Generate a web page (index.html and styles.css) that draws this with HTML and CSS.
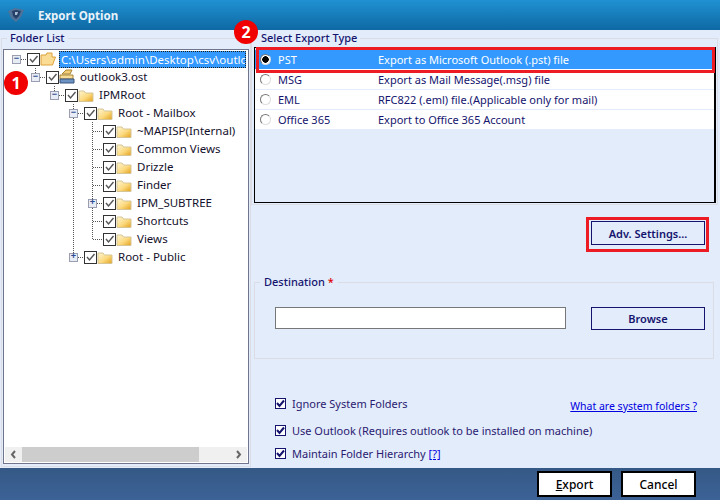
FILE: index.html
```html
<!DOCTYPE html>
<html lang="en">
<head>
    <meta charset="UTF-8">
    <meta name="viewport" content="width=device-width, initial-scale=1.0">
    <title>Export Option</title>
    <link rel="stylesheet" href="styles.css">
</head>
<body>
    <svg width="0" height="0" class="defs">
        <defs>
            <linearGradient id="fold" x1="0" y1="0" x2="1" y2="1">
                <stop offset="0" stop-color="#fff6d2"/>
                <stop offset="0.55" stop-color="#fbd97e"/>
                <stop offset="1" stop-color="#e3a11c"/>
            </linearGradient>
            <g id="closed">
                <path d="M1 2H6L7.5 4H15V12.5H1Z" fill="url(#fold)" stroke="#d6c596"/>
            </g>
            <g id="tick">
                <path d="M2 5 L4.5 8 L9.5 2" class="tick"/>
            </g>
        </defs>
    </svg>

    <div class="window">
        <div class="titlebar">
            <svg class="app-icon" width="18" height="16" viewBox="0 0 18 16">
                <path d="M1 4 L8 1 L17 3 L14 10 L9 15 L4 11 Z" fill="#4f7298"/>
                <path d="M5 4 L9 3 L14 4 L12 9 L9 12 L6 9 Z" fill="#27406a"/>
                <path d="M8 5 L11 5 L10 8 L8 8 Z" fill="#a9bdd2"/>
            </svg>
            <span>Export Option</span>
        </div>

        <div class="content">
            <div class="left-panel">
                <div class="group-title folder-title">Folder List</div>
                <div class="tree-box">
                    <!-- connector lines sit over the rows -->
                    <svg class="tree-lines" width="120" height="220">
                        <g stroke="#555" stroke-dasharray="1 1" fill="none">
                            <path d="M21 11.5H27"/>
                            <path d="M35.5 20V25M40 29.5H46"/>
                            <path d="M54.5 38V43M59 47.5H65"/>
                            <path d="M73.5 56V61M73.5 70V205M78 65.5H84M78 209.5H84"/>
                            <path d="M92.5 74V151M92.5 160V191M93 83.5H103M93 101.5H103M93 119.5H103M93 137.5H103M93 173.5H103M93 191.5H103M97 155.5H103"/>
                        </g>
                    </svg>
                    <div class="tree-row depth-0">
                        <span class="exp">&minus;</span><span class="chk"><svg width="11" height="11" viewBox="0 0 11 11"><use href="#tick"/></svg></span>
                        <svg class="folder" width="16" height="14" viewBox="0 0 16 14"><path d="M1 3H6L7 1H12V5H15.5L12.5 13H1Z" fill="#fbdc95" stroke="#dca23a"/></svg>
                        <span class="tree-label selected">C:\Users\admin\Desktop\csv\outlo</span>
                    </div>
                    <div class="tree-row depth-1">
                        <span class="exp">&minus;</span><span class="chk"><svg width="11" height="11" viewBox="0 0 11 11"><use href="#tick"/></svg></span>
                        <svg class="folder" width="16" height="16" viewBox="0 0 16 16"><path d="M3 5 L7 1 H13 L11 5Z" fill="#f3cd77" stroke="#a88435"/><path d="M1 6H14V10H1Z" fill="#f7dc98" stroke="#a88435"/><path d="M1 10H15V14H1Z" fill="#6d93c4" stroke="#39557f"/></svg>
                        <span class="tree-label">outlook3.ost</span>
                    </div>
                    <div class="tree-row depth-2">
                        <span class="exp">&minus;</span><span class="chk"><svg width="11" height="11" viewBox="0 0 11 11"><use href="#tick"/></svg></span>
                        <svg class="folder" width="16" height="13" viewBox="0 0 16 13"><use href="#closed"/></svg>
                        <span class="tree-label">IPMRoot</span>
                    </div>
                    <div class="tree-row depth-3">
                        <span class="exp">&minus;</span><span class="chk"><svg width="11" height="11" viewBox="0 0 11 11"><use href="#tick"/></svg></span>
                        <svg class="folder" width="16" height="13" viewBox="0 0 16 13"><use href="#closed"/></svg>
                        <span class="tree-label">Root - Mailbox</span>
                    </div>
                    <div class="tree-row depth-4">
                        <span class="exp none"></span><span class="chk"><svg width="11" height="11" viewBox="0 0 11 11"><use href="#tick"/></svg></span>
                        <svg class="folder" width="16" height="13" viewBox="0 0 16 13"><use href="#closed"/></svg>
                        <span class="tree-label">~MAPISP(Internal)</span>
                    </div>
                    <div class="tree-row depth-4">
                        <span class="exp none"></span><span class="chk"><svg width="11" height="11" viewBox="0 0 11 11"><use href="#tick"/></svg></span>
                        <svg class="folder" width="16" height="13" viewBox="0 0 16 13"><use href="#closed"/></svg>
                        <span class="tree-label">Common Views</span>
                    </div>
                    <div class="tree-row depth-4">
                        <span class="exp none"></span><span class="chk"><svg width="11" height="11" viewBox="0 0 11 11"><use href="#tick"/></svg></span>
                        <svg class="folder" width="16" height="13" viewBox="0 0 16 13"><use href="#closed"/></svg>
                        <span class="tree-label">Drizzle</span>
                    </div>
                    <div class="tree-row depth-4">
                        <span class="exp none"></span><span class="chk"><svg width="11" height="11" viewBox="0 0 11 11"><use href="#tick"/></svg></span>
                        <svg class="folder" width="16" height="13" viewBox="0 0 16 13"><use href="#closed"/></svg>
                        <span class="tree-label">Finder</span>
                    </div>
                    <div class="tree-row depth-4">
                        <span class="exp">+</span><span class="chk"><svg width="11" height="11" viewBox="0 0 11 11"><use href="#tick"/></svg></span>
                        <svg class="folder" width="16" height="13" viewBox="0 0 16 13"><use href="#closed"/></svg>
                        <span class="tree-label">IPM_SUBTREE</span>
                    </div>
                    <div class="tree-row depth-4">
                        <span class="exp none"></span><span class="chk"><svg width="11" height="11" viewBox="0 0 11 11"><use href="#tick"/></svg></span>
                        <svg class="folder" width="16" height="13" viewBox="0 0 16 13"><use href="#closed"/></svg>
                        <span class="tree-label">Shortcuts</span>
                    </div>
                    <div class="tree-row depth-4">
                        <span class="exp none"></span><span class="chk"><svg width="11" height="11" viewBox="0 0 11 11"><use href="#tick"/></svg></span>
                        <svg class="folder" width="16" height="13" viewBox="0 0 16 13"><use href="#closed"/></svg>
                        <span class="tree-label">Views</span>
                    </div>
                    <div class="tree-row depth-3">
                        <span class="exp">+</span><span class="chk"><svg width="11" height="11" viewBox="0 0 11 11"><use href="#tick"/></svg></span>
                        <svg class="folder" width="16" height="13" viewBox="0 0 16 13"><use href="#closed"/></svg>
                        <span class="tree-label">Root - Public</span>
                    </div>
                    <div class="scrollbar">
                        <svg class="arrow" width="17" height="15" viewBox="0 0 17 15"><path d="M10 4 L7 7.5 L10 11" /></svg>
                        <div class="thumb"></div>
                        <svg class="arrow" width="17" height="15" viewBox="0 0 17 15"><path d="M7 4 L10 7.5 L7 11" /></svg>
                    </div>
                </div>
            </div>

            <div class="right-panel">
                <div class="type-group">
                    <div class="group-title type-title">Select Export Type</div>
                    <div class="type-list">
                        <div class="type-row active"><span class="radio on"></span><span class="type-name">PST</span><span>Export as Microsoft Outlook (.pst) file</span></div>
                        <div class="type-row"><span class="radio"></span><span class="type-name">MSG</span><span>Export as Mail Message(.msg) file</span></div>
                        <div class="type-row"><span class="radio"></span><span class="type-name">EML</span><span>RFC822 (.eml) file.(Applicable only for mail)</span></div>
                        <div class="type-row"><span class="radio"></span><span class="type-name">Office 365</span><span>Export to Office 365 Account</span></div>
                    </div>
                </div>

                <div class="adv-row">
                    <button class="button adv-btn">Adv. Settings...</button>
                </div>

                <div class="destination">
                    <div class="group-title dest-title">Destination <span class="req">*</span></div>
                    <input class="dest-input" type="text">
                    <button class="button browse-btn">Browse</button>
                </div>

                <div class="options">
                    <div class="option first">
                        <span class="opt-check"><svg width="9" height="9" viewBox="0 0 9 9"><path d="M1 4 L3.5 7 L8 1.5" /></svg></span>
                        <span>Ignore System Folders</span>
                        <a class="link what-link" href="#">What are system folders ?</a>
                    </div>
                    <div class="option">
                        <span class="opt-check"><svg width="9" height="9" viewBox="0 0 9 9"><path d="M1 4 L3.5 7 L8 1.5" /></svg></span>
                        <span>Use Outlook (Requires outlook to be installed on machine)</span>
                    </div>
                    <div class="option">
                        <span class="opt-check"><svg width="9" height="9" viewBox="0 0 9 9"><path d="M1 4 L3.5 7 L8 1.5" /></svg></span>
                        <span>Maintain Folder Hierarchy <a class="link" href="#">[?]</a></span>
                    </div>
                </div>
            </div>
        </div>

        <div class="footer">
            <button class="foot-btn"><u>E</u>xport</button>
            <button class="foot-btn">Cancel</button>
        </div>
    </div>

    <!-- markers over the screenshot -->
    <div class="marker marker-1">1</div>
    <div class="marker marker-2">2</div>
    <div class="red-box red-pst"></div>
    <div class="red-box red-adv"></div>
</body>
</html>
```

FILE: styles.css
```css
* {
    box-sizing: border-box;
}
body {
    margin: 0;
    font-family: "Noto Sans", Arial, sans-serif;
    font-size: 11px;
    background: #e3ecfb;
    overflow: hidden;
}
.window {
    width: 720px;
    height: 500px;
    display: flex;
    flex-direction: column;
}
.defs {
    position: absolute;
}
.titlebar {
    height: 30px;
    flex: none;
    display: flex;
    align-items: center;
    padding-left: 7px;
    gap: 13px;
    background: linear-gradient(#2091d2, #0e69a4);
    color: #e8f2fa;
    font-size: 11.5px;
    font-weight: bold;
}
.content {
    flex: 1;
    min-height: 0;
    display: flex;
}
.footer {
    height: 32px;
    flex: none;
    display: flex;
    justify-content: flex-end;
    align-items: center;
    gap: 9px;
    padding-right: 24px;
    background: linear-gradient(#355986, #3c6296);
}
.foot-btn {
    width: 75px;
    height: 26px;
    padding: 0;
    background: white;
    border: 2px solid #000;
    font-family: inherit;
    font-size: 12px;
    font-weight: 500;
    color: #000;
}

/* titles sit on the group box border */
.group-title {
    position: absolute;
    top: -8px;
    padding: 0 3px;
    background: #e3ecfb;
    font-size: 11px;
    font-weight: 500;
    color: #14146e;
    line-height: 14px;
}

/* left side */
.left-panel {
    position: relative;
    width: 250px;
    flex: none;
    margin: 8px 0 1px 1px;
    padding: 10px 1px 2px;
    border: 1px solid #dcdce4;
    display: flex;
    flex-direction: column;
}
.folder-title {
    left: 5px;
}
.tree-box {
    position: relative;
    flex: 1;
    background: white;
    border: 1px solid #70748c;
    display: flex;
    flex-direction: column;
}
.tree-lines {
    position: absolute;
    left: -4px;
    top: -2px;
}
.tree-row {
    height: 18px;
    display: flex;
    align-items: center;
    font-size: 11.5px;
    color: #14102c;
    white-space: nowrap;
    flex: none;
}
.depth-0 { padding-left: 8px; }
.depth-1 { padding-left: 27px; }
.depth-2 { padding-left: 46px; }
.depth-3 { padding-left: 65px; }
.depth-4 { padding-left: 84px; }
.exp {
    width: 9px;
    height: 9px;
    flex: none;
    border: 1px solid #9a9eb0;
    background: #e8ecf4;
    color: #2c4a90;
    font: bold 9px/7px "Liberation Mono", monospace;
    text-align: center;
    margin-right: 6px;
}
.exp.none {
    visibility: hidden;
}
.chk {
    width: 13px;
    height: 13px;
    flex: none;
    border: 1px solid #333;
    background: white;
    display: flex;
    align-items: center;
    justify-content: center;
}
.tick {
    fill: none;
    stroke: #555;
    stroke-width: 1.4;
}
.folder {
    flex: none;
    margin-right: 4px;
}
.tree-label {
    line-height: 16px;
    padding-left: 1px;
}
.tree-label.selected {
    margin-left: -1px;
    width: 187px;
    height: 17px;
    overflow: hidden;
    background: #3399ff;
    color: white;
    border: 1px dotted #222;
}
.scrollbar {
    margin: auto 1px 1px;
    height: 15px;
    background: #f0f0f0;
    display: flex;
    align-items: center;
    flex: none;
}
.arrow {
    flex: none;
}
.arrow path {
    fill: none;
    stroke: #666;
    stroke-width: 2;
}
.scrollbar .thumb {
    height: 15px;
    width: 177px;
    background: #cdcdcd;
    margin-right: auto;
}

/* right side */
.right-panel {
    flex: 1;
    min-width: 0;
    display: flex;
    flex-direction: column;
}
.type-group {
    position: relative;
    width: 467px;
    height: 167px;
    flex: none;
    margin-top: 8px;
    padding: 8px 0 0 2px;
    border: 1px solid #dcdce4;
}
.type-title {
    left: 6px;
}
.type-list {
    width: 462px;
    height: 156px;
    border: 1px solid #000;
    border-right-width: 2px;
    padding-top: 2px;
}
.type-row {
    height: 20px;
    display: flex;
    align-items: center;
    background: white;
    color: #14146e;
    border-bottom: 1px solid #e3ecfb;
    padding-left: 5px;
}
.type-row.active {
    background: #3399ff;
    color: white;
    border-bottom-color: white;
}
.radio {
    width: 11px;
    height: 11px;
    border-radius: 50%;
    border: 1px solid #777;
    border-right-color: #ddd;
    border-bottom-color: #ddd;
    background: white;
    flex: none;
    margin-right: 7px;
}
.radio.on {
    background: radial-gradient(circle, #000 3px, white 3.5px);
}
.type-name {
    width: 100px;
    flex: none;
}
.adv-row {
    display: flex;
    justify-content: flex-end;
    padding: 16px 15px 0 0;
    flex: none;
}
.button {
    width: 114px;
    padding: 0;
    background: #e3ecfb;
    border: 1px solid #14146e;
    font-family: inherit;
    font-size: 11px;
    font-weight: 600;
    color: #14146e;
}
.adv-btn {
    height: 24px;
}
.browse-btn {
    height: 23px;
}
.destination {
    position: relative;
    width: 460px;
    height: 77px;
    margin: 37px 0 0 3px;
    border: 1px solid #dcdce4;
    display: flex;
    align-items: flex-start;
    padding: 24px 0 0 20px;
    flex: none;
}
.dest-title {
    left: 5px;
    padding: 0 4px;
}
.req {
    color: #e00000;
}
.dest-input {
    width: 291px;
    height: 22px;
    border: 1px solid #777;
    background: white;
    margin-right: 25px;
}
.options {
    padding: 33px 0 0 24px;
    color: #2a1a70;
    flex: 1;
    min-height: 0;
}
.option {
    display: flex;
    align-items: center;
    height: 23px;
    gap: 6px;
}
.option.first {
    margin-bottom: 4px;
}
.opt-check {
    width: 11px;
    height: 11px;
    flex: none;
    border: 1px solid #14146e;
    background: white;
    display: flex;
    align-items: center;
    justify-content: center;
}
.opt-check path {
    fill: none;
    stroke: #14146e;
    stroke-width: 2;
}
.link {
    color: #0000e0;
    text-decoration: underline;
}
.what-link {
    margin-left: auto;
    margin-right: 23px;
    margin-top: 4px;
    font-size: 10.5px;
}

/* annotations */
.marker {
    position: absolute;
    width: 24px;
    height: 24px;
    border-radius: 50%;
    background: #f00000;
    color: white;
    font-size: 16px;
    font-weight: bold;
    line-height: 24px;
    text-align: center;
}
.marker-1 {
    left: 4px;
    top: 71px;
}
.marker-2 {
    left: 234px;
    top: 20px;
}
.red-box {
    position: absolute;
    border: 3px solid #ed1c24;
}
.red-pst {
    left: 256px;
    top: 47px;
    width: 459px;
    height: 26px;
}
.red-adv {
    left: 586px;
    top: 217px;
    width: 123px;
    height: 35px;
}
```
